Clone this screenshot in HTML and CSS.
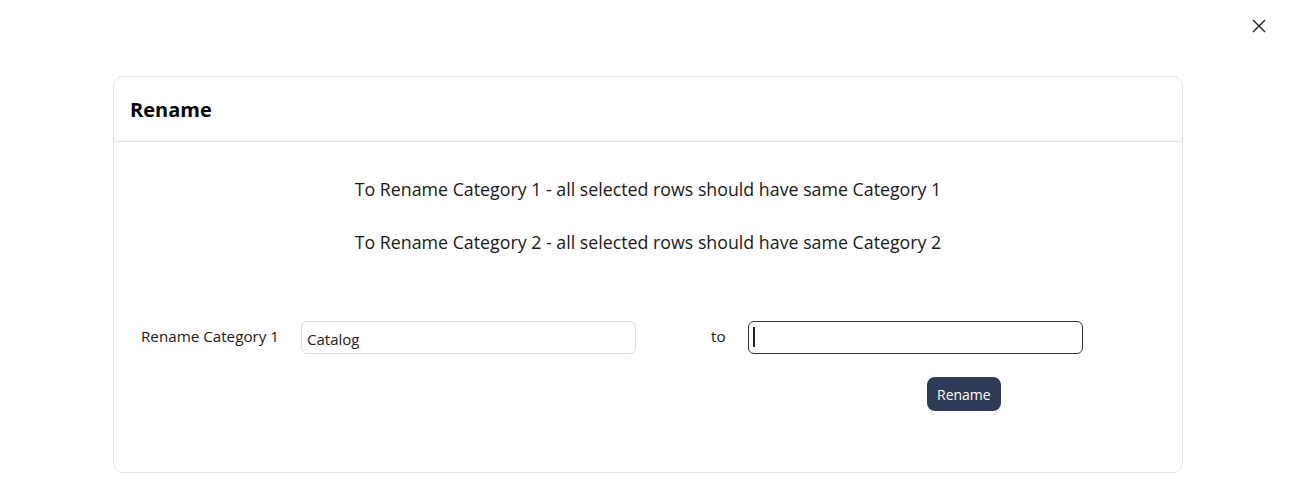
FILE: index.html
```html
<!DOCTYPE html>
<html lang="en">
<head>
  <meta charset="UTF-8">
  <meta name="viewport" content="width=device-width, initial-scale=1.0">
  <title>Rename</title>
  <link rel="stylesheet" href="styles.css">
</head>
<body>
  <button class="btn-close" aria-label="Close">
    <svg width="16" height="16" viewBox="0 0 16 16">
      <path d="M2 2 L14 14 M14 2 L2 14" stroke="#222" stroke-width="1.4" fill="none"/>
    </svg>
  </button>

  <div class="card">
    <div class="card-header">Rename</div>
    <div class="card-body">
      <p class="note">To Rename Category 1 - all selected rows should have same Category 1</p>
      <p class="note">To Rename Category 2 - all selected rows should have same Category 2</p>

      <div class="rename-form">
        <label class="label" for="from">Rename Category 1</label>
        <input type="text" id="from" class="field" value="Catalog" readonly>
        <span class="label label-to">to</span>
        <span class="field-wrap">
          <input type="text" id="to" class="field field-active">
          <span class="caret"></span> <!-- focused caret -->
        </span>
        <button class="btn-rename">Rename</button>
      </div>
    </div>
  </div>
</body>
</html>
```

FILE: styles.css
```css
/***----BASIC----***/
body {
  font-family: 'Open Sans', 'Noto Sans', sans-serif;
  background: #fff;
  color: #1a1a1a;
  margin: 0;
  padding: 76px 0 0 113px;
}

.btn-close {
  position: absolute;
  top: 18px;
  right: 31px;
  width: 16px;
  height: 16px;
  padding: 0;
  border: none;
  background: none;
  cursor: pointer;
}

/***----Card----***/
.card {
  width: 1070px;
  height: 397px;
  border: 1px solid #e4e4e7;
  border-radius: 10px;
  box-sizing: border-box;
}
.card-header {
  height: 65px;
  box-sizing: border-box;
  padding: 19px 16px 0;
  font-size: 20px;
  font-weight: 700;
  color: #000;
  border-bottom: 1px solid #e4e4e7;
}
.card-body {
  padding: 36px 27px 0;
}
.note {
  margin: 0 0 30px;
  text-align: center;
  font-size: 17.8px;
  line-height: 23px;
}

/***----Form----***/
.rename-form {
  display: grid;
  grid-template-columns: 160px 335px 112px 335px;
  align-items: center;
  row-gap: 23px;
  margin-top: 67px;
}
.label {
  font-size: 15.2px;
  padding-bottom: 3px;
}
.label-to {
  padding-left: 75px;
}
.field {
  width: 100%;
  height: 33px;
  box-sizing: border-box;
  border: 1px solid #dcdce0;
  border-radius: 6px;
  padding: 3px 5px 0;
  font-family: inherit;
  font-size: 15px;
  color: #222;
}
.field:focus {
  outline: none;
}
.field-wrap {
  position: relative;
  display: block;
}
.field-active {
  border-color: #333;
  display: block;
}
.caret {
  position: absolute;
  left: 5px;
  top: 6px;
  width: 1.5px;
  height: 20px;
  background: #222;
}
.btn-rename {
  grid-column: 4;
  justify-self: start;
  margin-left: 179px;
  height: 34px;
  padding: 0 10px;
  border: none;
  border-radius: 8px;
  background: #2f3a56;
  color: #fff;
  font-family: inherit;
  font-size: 14px;
  cursor: pointer;
}
```
